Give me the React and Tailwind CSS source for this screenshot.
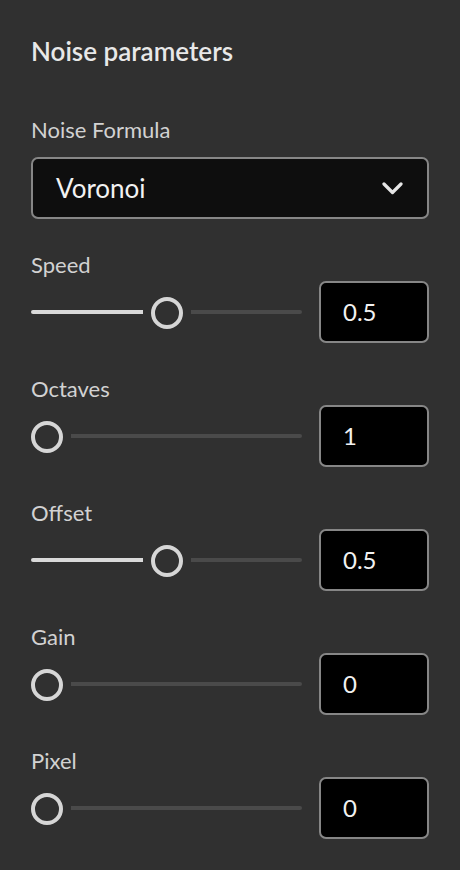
import { useState } from "react";

const params = [
  { name: "Speed", value: 0.5, label: "0.5" },
  { name: "Octaves", value: 0, label: "1" },
  { name: "Offset", value: 0.5, label: "0.5" },
  { name: "Gain", value: 0, label: "0" },
  { name: "Pixel", value: 0, label: "0" },
];

const Slider = ({ value }) => {
  return (
    <div className="flex-1 flex items-center h-[32px]">
      {value > 0 && (
        <>
          <div
            className="h-[4px] rounded-l-full bg-[#d9d9d9]"
            style={{ width: `calc(${value} * (100% - 32px) - 8px)` }}
          />
          <div className="w-[8px]" />
        </>
      )}
      <div className="w-[32px] h-[32px] shrink-0 rounded-full border-4 border-[#d6d6d6] translate-y-[1px]" />
      <div className="w-[8px]" />
      <div className="flex-1 h-[4px] rounded-r-full bg-[#4a4a4a]" />
    </div>
  );
};

const ParamRow = ({ name, value, label }) => (
  <div className="flex flex-col">
    <div className="text-[22px] leading-[26px] text-[#d2d2d2]">{name}</div>
    <div className="mt-[3px] flex items-center gap-[17px]">
      <Slider value={value} />
      <div className="w-[110px] h-[62px] rounded-[7px] border-2 border-[#868686] bg-black flex items-center pl-[22px] text-[24px] text-[#f2f2f2]">
        {label}
      </div>
    </div>
  </div>
);

export default function App() {
  const [formula] = useState("Voronoi");

  return (
    <div
      className="w-[460px] min-h-[870px] bg-[#303030] px-[31px] pt-[35px] pb-[20px]"
      style={{ fontFamily: "Lato, 'Noto Sans', sans-serif" }}
    >
      <h2 className="text-[26px] leading-[32px] font-semibold text-[#e8e8e8]">Noise parameters</h2>

      <div className="mt-[50px] text-[22px] leading-[26px] text-[#d2d2d2]">Noise Formula</div>
      <div className="mt-[14px] h-[62px] rounded-[7px] border-2 border-[#868686] bg-[#0e0e0e] flex items-center justify-between pl-[23px] pr-[24px]">
        <span className="text-[26px] text-[#f2f2f2]">{formula}</span>
        <svg width="21" height="13" viewBox="0 0 21 13" fill="none">
          <path d="M2 2l8.5 8.5L19 2" stroke="#e6e6e6" strokeWidth="3.2" strokeLinecap="round" strokeLinejoin="round" />
        </svg>
      </div>

      <div className="mt-[33px] flex flex-col gap-[33px]">
        {params.map((p) => (
          <ParamRow key={p.name} {...p} />
        ))}
      </div>
    </div>
  );
}
